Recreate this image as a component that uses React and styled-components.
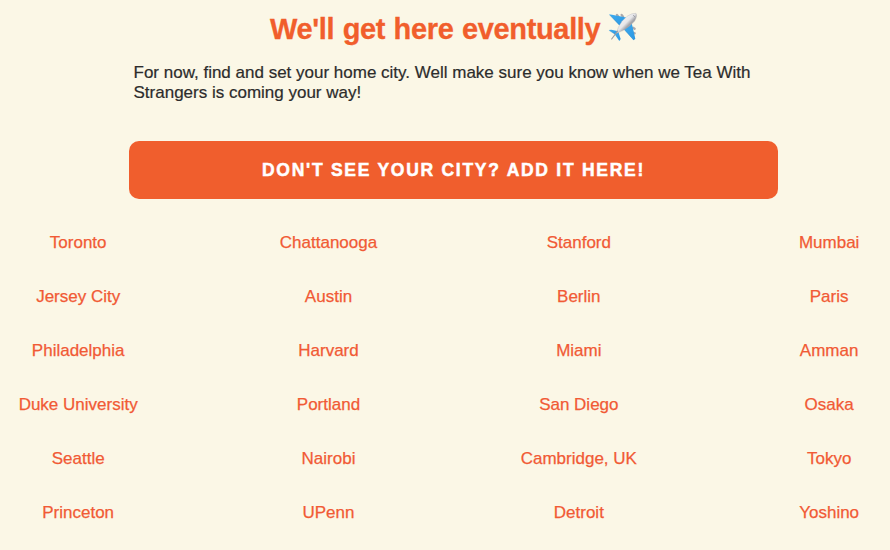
import React from "react";
import styled, { createGlobalStyle } from "styled-components";

const GlobalStyle = createGlobalStyle`
  * { box-sizing: border-box; }
  body { margin: 0; background: #fbf7e6; font-family: "Liberation Sans", Arial, sans-serif; }
`;

const Page = styled.main`
  width: 890px;
  height: 550px;
  overflow: hidden;
  background: #fbf7e6;
`;

const Heading = styled.h1`
  margin: 0;
  padding: 11px 0 0 270px;
  display: flex;
  font-size: 29px;
  line-height: 36px;
  font-weight: 700;
  letter-spacing: -0.34px;
  word-spacing: 0.7px;
  color: #f15e2c;
  -webkit-text-stroke: 0.3px #f15e2c;
  white-space: nowrap;
`;

const HeadingText = styled.span`
  width: 338px;
`;

const PlaneIcon = styled.svg`
  width: 30px;
  height: 30px;
  margin-top: 1px;
`;

const Intro = styled.p`
  margin: 16px 0 0 133.5px;
  width: 640px;
  font-size: 17px;
  line-height: 20px;
  color: #2c2c2c;
  -webkit-text-stroke: 0.2px #2c2c2c;
`;

const AddButton = styled.button`
  display: block;
  margin: 38px 0 0 129px;
  width: 649px;
  height: 58px;
  padding: 0;
  border: 0;
  border-radius: 10px;
  background: #f05e2d;
  color: #fff;
  font: 700 17.5px "Liberation Sans", Arial, sans-serif;
  letter-spacing: 1.73px;
  -webkit-text-stroke: 0.5px #fff;
`;

const Cities = styled.div`
  margin: 17px 0 0 -47px;
  display: grid;
  grid-template-columns: repeat(4, 250.33px);
  grid-auto-rows: 54px;
`;

const City = styled.a`
  font-size: 17px;
  line-height: 54px;
  text-align: center;
  color: #f15a35;
  -webkit-text-stroke: 0.25px #f15a35;
`;

const Plane = () => (
  <PlaneIcon viewBox="24 21 90 90" aria-hidden="true">
    <defs>
      <linearGradient id="body" x1="58" y1="52" x2="76" y2="70" gradientUnits="userSpaceOnUse">
        <stop offset="0" stopColor="#f4f4f4" />
        <stop offset="0.6" stopColor="#e6e6e8" />
        <stop offset="1" stopColor="#a5a5aa" />
      </linearGradient>
      <linearGradient id="wing" x1="0" y1="0" x2="1" y2="1">
        <stop offset="0" stopColor="#3dabef" />
        <stop offset="1" stopColor="#2b97e2" />
      </linearGradient>
    </defs>
    <g stroke="#a9a9ad" strokeWidth="7" strokeLinecap="round">
      <path d="M51 30 L55 35 M65 30 L69 35 M99 68 L104 71 M98 83 L104 85" />
    </g>
    <path d="M27 28 L36 29 L82 38 L58 61Z" fill="url(#wing)" />
    <path d="M94 50 L106 101 L101 106 L71 72Z" fill="url(#wing)" />
    <path d="M26 75 L34 74 L55 79 L47 89Z" fill="url(#wing)" />
    <path d="M55 80 L62 102 L58 108 L44 88Z" fill="url(#wing)" />
    <path d="M29 30 L58 60 M73 74 L101 105 M28 77 L46 88" stroke="#2d7eb8" strokeWidth="1" fill="none" />
    <path d="M81 34 Q97 23 108 25 Q113 32 104 48 L89 63 Q70 79 49 85 Q53 66 66 49Z" fill="url(#body)" stroke="#a9a9ac" strokeWidth="1" />
    <path d="M53 78 L35 102" stroke="#9b9b9f" strokeWidth="3.5" strokeLinecap="round" />
    <path d="M99 30 L105 36" stroke="#8b8f95" strokeWidth="2" />
  </PlaneIcon>
);

const cities = [
  "Toronto", "Chattanooga", "Stanford", "Mumbai",
  "Jersey City", "Austin", "Berlin", "Paris",
  "Philadelphia", "Harvard", "Miami", "Amman",
  "Duke University", "Portland", "San Diego", "Osaka",
  "Seattle", "Nairobi", "Cambridge, UK", "Tokyo",
  "Princeton", "UPenn", "Detroit", "Yoshino",
];

export default function App() {
  return (
    <Page>
      <GlobalStyle />
      <Heading>
        <HeadingText>We'll get here eventually</HeadingText>
        <Plane />
      </Heading>
      <Intro>For now, find and set your home city. Well make sure you know when we Tea With Strangers is coming your way!</Intro>
      <AddButton>DON'T SEE YOUR CITY? ADD IT HERE!</AddButton>
      <Cities>{cities.map((city) => <City key={city}>{city}</City>)}</Cities>
    </Page>
  );
}
